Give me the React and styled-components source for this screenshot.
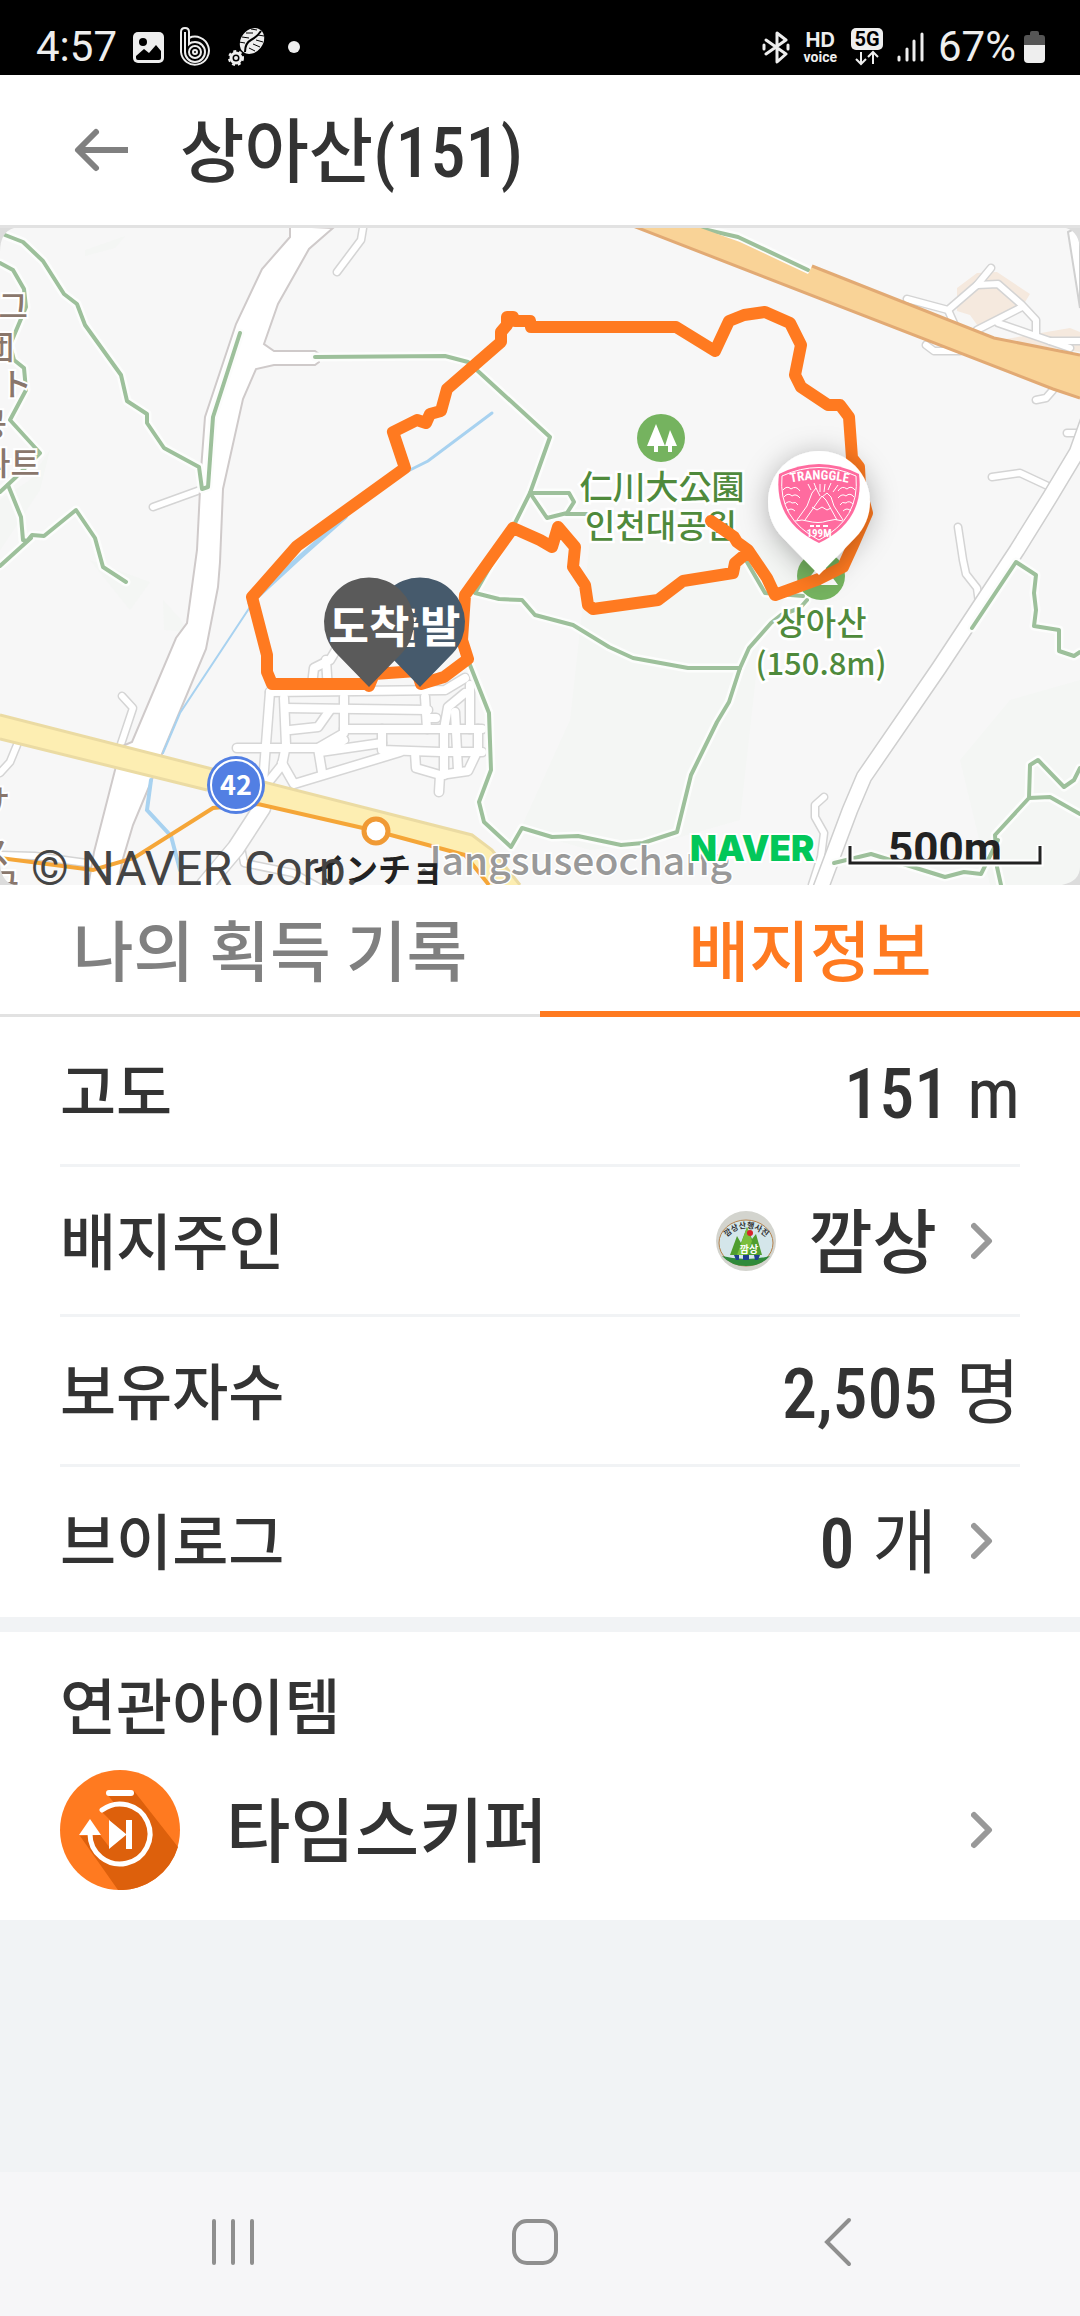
import React, { useState } from 'react'
import styled, { createGlobalStyle } from 'styled-components'

const GlobalStyle = createGlobalStyle`
  * {
    box-sizing: border-box;
  }
  body {
    margin: 0;
    background: #f1f3f5;
    color: #333;
    font-family: "Roboto Condensed", "Liberation Sans Narrow", "Noto Sans CJK KR", sans-serif;
  }
`

const Page = styled.div`
  min-height: 100vh;
  display: flex;
  flex-direction: column;
`

const StatusBar = styled.div`
  height: 75px;
  padding: 19px 35px 0 36px;
  display: flex;
  align-items: center;
  justify-content: space-between;
  background: #000;
  color: #eee;
  font-family: Roboto, sans-serif;
  font-size: 42px;
  line-height: 48px;
`

const StatusGroup = styled.div`
  display: flex;
  align-items: center;
  gap: ${props => props.$gap}px;
`

const Voice = styled.div`
  display: flex;
  flex-direction: column;
  align-items: center;
  font-family: Inter, sans-serif;
  font-weight: 700;
  font-size: 20px;
  line-height: 20px;

  small {
    font-family: Roboto, sans-serif;
    font-size: 14px;
    line-height: 14px;
  }
`

const Header = styled.header`
  height: 153px;
  padding: 0 60px 0 66px;
  display: flex;
  align-items: center;
  gap: 44px;
  background: #fff;
  border-bottom: 3px solid #e2e2e2;
`

const Title = styled.h1`
  margin: 0;
  padding-top: 6px;
  font-size: 70px;
  font-weight: 500;
  line-height: 100px;
`

const IconButton = styled.button`
  display: flex;
  align-items: center;
  justify-content: center;
  padding: 0;
  border: 0;
  background: none;
`

const MapView = styled.svg`
  display: block;
  width: 100%;
  height: auto;
  font-family: "Noto Sans CJK KR", sans-serif;
`

const Tabs = styled.div`
  display: flex;
  background: #fff;
`

const Tab = styled.button`
  flex: 1;
  height: 132px;
  padding: 6px 0 0;
  border: 0;
  background: none;
  font-family: inherit;
  font-size: 66px;
  font-weight: 500;
  line-height: 96px;
  color: ${props => (props.$active ? '#ff7a20' : '#808080')};
  box-shadow: inset 0 ${props => (props.$active ? '-6px 0 #ff7a20' : '-3px 0 #e2e2e2')};
`

const Panel = styled.section`
  padding: 0 60px;
  background: #fff;
`

const Row = styled.div`
  height: 150px;
  display: flex;
  align-items: center;
  justify-content: space-between;
  color: inherit;
  text-decoration: none;
  border-bottom: 3px solid ${props => (props.$last ? '#fff' : '#f1f3f5')};
`

const Label = styled.span`
  padding-top: 6px;
  font-size: 61px;
  font-weight: 500;
  line-height: 90px;
`

const Value = styled.span`
  display: flex;
  align-items: center;
`

const ValueText = styled.span`
  padding-top: 6px;
  font-size: 70px;
  font-weight: 500;
  line-height: 100px;
`

const Unit = styled.span`
  margin-left: 18px;
  font-weight: 400;
`

const Avatar = styled.svg`
  width: 60px;
  height: 60px;
  margin-right: 32px;
`

const Arrow = styled.svg`
  width: 24px;
  height: 40px;
  margin: 0 25px 0 34px;
`

const Related = styled.section`
  margin-top: 15px;
  padding: 26px 60px 30px;
  background: #fff;
`

const RelatedTitle = styled.h2`
  margin: 0 0 16px;
  padding-top: 6px;
  font-size: 61px;
  font-weight: 500;
  line-height: 90px;
`

const Item = styled.a`
  display: flex;
  align-items: center;
  height: 120px;
  color: inherit;
  text-decoration: none;
`

const ItemName = styled(ValueText)`
  flex: 1;
  margin-left: 46px;
`

const NavBar = styled.nav`
  height: 144px;
  margin-top: auto;
  padding: 0 91px 4px 82px;
  display: flex;
  background: #f6f6f8;

  ${IconButton} {
    flex: 1;
  }
`

const trails = [
  '5,235 23,242 43,261 64,294 77,304 85,325 121,375 127,401 147,414 147,423 164,448 199,467 202,489 208,487 213,417 240,333',
  '0,263 13,270 24,289 26,307 10,345 14,360 24,368 26,390 10,420 40,453 15,478 0,492',
  '8,485 21,517 23,540 27,541 32,535 44,536 76,510 95,538 103,567 126,582',
  '0,566 31,538',
  '315,357 445,356 468,362 550,437 530,493 515,523 475,593 499,599 522,600 535,615 573,625 609,647 633,658 688,668 740,668',
  '530,493 569,493 574,502 567,513 547,518 530,493',
  '566,514 587,514',
  '807,600 800,608 781,615 771,623 749,648 740,668 729,702 717,722 691,775 677,832 643,843 621,845 578,836 552,837 522,828 511,847 484,822 479,802 491,770 489,713 470,665',
  '747,562 765,593 803,596',
  '972,628 1016,562 1036,575 1034,593 1036,610 1034,626 1059,630 1059,651 1074,656 1080,652',
  '1080,768 1074,780 1064,787 1038,760 1030,765 1029,798 1050,797 1080,814',
  '1029,798 995,835 997,867 1001,885',
  '834,863 871,854 945,877 964,872 981,874 998,840',
  '699,228 738,237 808,270',
]

const lanes = [
  '363,228 361,240 337,272',
  '153,507 200,490',
  '122,696 133,708 120,747',
  '17,745 10,762 0,773',
  '0,855 35,856 94,864',
  '992,477 1020,473 1050,487',
  '958,527 963,560 966,574 977,588 979,603',
  '1067,433 1080,433',
  '1036,400 1046,398 1053,390',
  '824,797 815,805 815,817 824,833 821,857 812,885',
  '907,299 948,310 977,285 998,284 1022,305 1036,320 1036,335',
  '991,268 977,285',
  '948,310 957,330',
  '1022,307 977,330',
  '998,323 1070,348',
  '1050,341 1080,341',
  '926,345 934,351 960,351',
  '241,847 244,863 293,873 320,888',
]

const streets = [
  '270,692 264,770 262,795',
  '270,692 445,690 465,678',
  '285,708 428,710',
  '284,698 286,745',
  '344,697 344,733 318,748 237,748',
  '290,730 318,727 330,710',
  '344,729 424,729 482,729',
  '425,697 427,729',
  '427,718 436,718',
  '344,740 320,752 382,743',
  '382,729 382,750 440,752 482,752',
  '400,752 294,784 282,763',
  '262,790 282,765 286,745',
  '318,748 322,772',
  '415,752 416,768 440,775 468,771 478,750 478,729',
  '439,792 440,775',
  '444,775 444,729 448,707 465,693',
  '470,685 470,729',
  '455,712 458,770',
  '312,685 314,668 330,660 336,650',
  '326,660 328,690',
]

const Cased = ({ lines, width, color, casing, extra }) => (
  <g fill="none" strokeLinejoin="round" strokeLinecap="round">
    {lines.map(points => <polyline key={points} points={points} stroke={casing} strokeWidth={width + extra} />)}
    {lines.map(points => <polyline key={points} points={points} stroke={color} strokeWidth={width} />)}
  </g>
)

const Pin = ({ x, color, label }) => (
  <g>
    <path d={`M${x} 687 L${x - 33} 653 A45 45 0 1 1 ${x + 33} 653 Z`} fill={color} />
    <text x={x} y="643" textAnchor="middle" fontSize="44" fontWeight="700" fill="#fff">{label}</text>
  </g>
)

const TrailMap = () => (
  <MapView viewBox="0 228 1080 657" role="img" aria-label="상아산">
    <rect y="228" width="1080" height="657" fill="#f7f7f7" />
    <g fill="#f4f6f4">
      <path d="M85 250l40-14-10 12-30 8zM0 500l30-20 20-30-10 40-40 60zM90 560l60 22-20 28zM163 600l18 20 6 12-23-2z" />
      <path d="M590 540l230 0 -60 100-20 180-70 20-80 10-70-20 50-110zM960 760l50-60 70-20v205h-90z" />
    </g>
    <path d="M957 288l20-15 20-1 33 22-8 13-42 22-10-14-13-4zM1000 340l70-12 10 4v20z" fill="#f5e9de" />

    <Cased lines={lanes} width={6} extra={3} color="#fff" casing="#d4d4d4" />
    <Cased lines={streets} width={8} extra={3} color="#fff" casing="#d6d6d6" />
    <Cased lines={['262,808 236,848 205,885']} width={16} extra={3} color="#fff" casing="#d4d4d4" />
    <Cased lines={['1092,410 1077,452 1050,497 1017,550 939,668 864,777 850,810 820,890']} width={14} extra={3} color="#fff" casing="#cfcfcf" />
    <path d="M1068 232l8-4h4v80z" fill="#fff" stroke="#d0d0d0" strokeWidth="2" />
    <path
      d="M290 226v11l-28 32-26 55-31 93-4 53-4 80-10 73-11 15-44 104-12 5-5 23-21 82-6 35h30l4-25 11-37 18-43 11-28 44-105 12-62 2-25 3-73 20-90 13-30 18-4h41l4-3v-8l-4-3h-41l-10-7 14-40 31-55 24-21z"
      fill="#fff" stroke="#cfcaca" strokeWidth="2"
    />

    <g fill="none" stroke="#a8d2f0" strokeLinecap="round">
      <path d="M492 413l-24 18-40 30-18 9" strokeWidth="3" />
      <path d="M345 517l-45 40-50 46" strokeWidth="5" />
      <path d="M250 607l-70 106-17 40" strokeWidth="2" />
      <path d="M151 780l-4 30 24 26 9 34" strokeWidth="4" />
    </g>

    <Cased lines={trails} width={4} extra={5} color="#9dc09b" casing="#fcfdfc" />

    <path d="M633 226h62l45 16 68 32 4-8 182 72 86 17v42l-27-8z" fill="#f9d397" />
    <path d="M633 226l420 163 27 9M812 266l182 72 86 17" fill="none" stroke="#e2aa74" strokeWidth="3" />
    <path d="M0 715l472 120 20 15 28 35h-31l-24-30-258-65-207-51z" fill="#fdeeb2" />
    <path d="M0 715l472 120 20 15 28 35M0 739l207 51" fill="none" stroke="#ebdba3" strokeWidth="3" />
    <path d="M0 858l93 12 41-12 79-50 45-4 118 27 89 24 24 30" fill="none" stroke="#f5a638" strokeWidth="4" />
    <circle cx="376" cy="831" r="12" fill="#fff" stroke="#f09a35" strokeWidth="5" />
    <circle cx="236" cy="785" r="29" fill="#527fe3" />
    <circle cx="236" cy="785" r="25" fill="none" stroke="#fff" strokeWidth="2" />
    <text x="236" y="795" textAnchor="middle" fontSize="27" fontWeight="700" fill="#fff">42</text>

    <g fontSize="32" fontWeight="500" fill="#8a776c" stroke="#fff" strokeWidth="4" paintOrder="stroke" textAnchor="end">
      <text x="28" y="318">그</text>
      <text x="14" y="359">団</text>
      <text x="32" y="396">ト</text>
      <text x="7" y="436">공</text>
      <text x="40" y="475">파트</text>
      <text x="10" y="813">サ</text>
      <text x="10" y="864">ス</text>
      <text x="19" y="897">국</text>
    </g>

    <circle cx="661" cy="438" r="24" fill="#75b35f" />
    <path d="M656 424l9 22h-7v6h-4v-6h-7zM670 430l7 16h-5v6h-4v-6h-3z" fill="#fff" />
    <circle cx="821" cy="576" r="24" fill="#75b35f" />
    <path d="M821 562l17 23h-34z" fill="#fff" />
    <g fontSize="33" fontWeight="500" fill="#4f8a3c" stroke="#fff" strokeWidth="5" paintOrder="stroke" textAnchor="middle">
      <text x="662" y="499">仁川大公園</text>
      <text x="661" y="538">인천대공원</text>
      <text x="821" y="635">상아산</text>
      <text x="821" y="675" fontSize="31">(150.8m)</text>
    </g>
    <text x="420" y="875" fontSize="39" fontWeight="500" fill="#999" stroke="#fff" strokeWidth="3" paintOrder="stroke">Jangsuseochang</text>

    <path
      d="M369 684L272 684 267 672V655L252 597 297 546 405 468 393 432 417 420 426 423 430 414 441 411 447 389 501 342V332L507 325V317H513L515 321 530 321 531 327H676L715 351 729 321 744 315 765 312 790 323 801 345 795 375 801 387 828 405H840L849 417 852 458 859 467 860 487 867 513 853 545 843 567 819 579 775 595 767 578 748 550 737 542 734 537 711 521M748 552L735 563 733 573 683 581 658 600 593 609 588 605 585 585 573 567 575 547 558 527 552 547 540 540 513 528 465 595 462 640 468 659 444 677 421 684 417 671 374 674 369 686"
      fill="none" stroke="#ff7a20" strokeWidth="12" strokeLinejoin="round" strokeLinecap="round"
    />

    <Pin x={420} color="#465a6c" label="출발" />
    <Pin x={369} color="#5a5a5a" label="도착" />

    <defs>
      <filter id="pin-shadow" x="-50%" y="-50%" width="200%" height="200%">
        <feDropShadow dx="0" dy="4" stdDeviation="14" floodColor="#000" floodOpacity="0.3" />
      </filter>
      <path id="badge-arc" d="M785 484q34-9 69 0" />
    </defs>
    <path d="M819 575L783 538A51 51 0 1 1 855 538Z" fill="#fff" filter="url(#pin-shadow)" />
    <path d="M779 474q40-20 80 0q6 47-40 69q-46-22-40-69z" fill="#ff6b9f" />
    <g fill="none" stroke="#fff" strokeWidth="1">
      <path d="M782 476q37-17 74 0q4 43-37 64q-41-21-37-64z" />
      <path d="M797 520l10-14 5-13 4-5 4 8M843 520l-9-14-3-9-4-4-5 4M805 520l14-20 3-4 4 4 11 20M812 507l5 3 5-3 5 3 4-2M795 521q8-2 12 0q12 3 20 0q8-3 16 0" />
      <path d="M783 490q4-5 8-1q5-4 9 2M784 497q4-5 8-1q4-3 8 2M785 504q4-4 7-1q4-2 6 2M787 511q4-4 8 0M855 490q-4-5-8-1q-5-4-9 2M854 497q-4-5-8-1q-4-3-8 2M853 504q-4-4-7-1q-4-2-6 2M851 511q-4-4-8 0" />
      <path d="M820 492v-8M824 492l1-8M816 488l-2-5M828 490l3-7M833 492l5-7M811 490l-3-6" />
      <path d="M810 526h4M816 526h4M823 526h5" strokeWidth="2" />
    </g>
    <g fontFamily="Roboto Condensed, Roboto, sans-serif" fontWeight="700" fill="#fff" textAnchor="middle">
      <text fontSize="13">
        <textPath href="#badge-arc" startOffset="50%">TRANGGLE</textPath>
      </text>
      <text x="819" y="537" fontSize="11">199M</text>
    </g>

    <text x="312" y="882" fontSize="33" fontWeight="700" fill="#222">インチョ</text>
    <text x="31" y="885" fontSize="48" fontFamily="Roboto, sans-serif" fill="#444">© NAVER Corp.</text>
    <text x="690" y="861" fontSize="35" fontFamily="Inter, sans-serif" fontWeight="900" fill="#03c75a" stroke="#fff" strokeWidth="4" paintOrder="stroke">NAVER</text>
    <text x="945" y="864" textAnchor="middle" fontSize="44" fontFamily="Roboto, sans-serif" fontWeight="700" fill="#222">500m</text>
    <path d="M850 845v18h190v-18" fill="none" stroke="#fff" strokeWidth="7" />
    <path d="M850 846v17h190v-17" fill="none" stroke="#222" strokeWidth="3" />
    <path d="M0 228h14q-14 4-14 24zM1080 228h-14q14 4 14 24zM0 885h14q-14-4-14-24zM1080 885h-18q18-4 18-18z" fill="#dcdcdc" />
  </MapView>
)

const Chevron = () => (
  <Arrow viewBox="0 0 24 40" fill="none" stroke="#999" strokeWidth="6" strokeLinecap="round" strokeLinejoin="round">
    <path d="M3 5l15 15L3 35" />
  </Arrow>
)

const OwnerAvatar = () => (
  <Avatar viewBox="0 0 60 60">
    <circle cx="30" cy="30" r="30" fill="#d3d4ce" />
    <ellipse cx="30" cy="32" rx="27" ry="23" fill="#d4e6ea" stroke="#b5824e" strokeWidth="1" />
    <path d="M6 45q24 6 48 0q-9 10-24 10t-24-10z" fill="#2f8a3a" />
    <path d="M14 44l7-19 4 7 6-16 5 12 4-5 6 21z" fill="#4f9e2f" />
    <path d="M21 44l10-28 5 14-5 14z" fill="#7bbf3c" />
    <circle cx="34" cy="22" r="3" fill="#d8232a" />
    <path d="M18 44h5v5h-3zM27 44h6v5h-6zM38 44h6l-2 5h-3z" fill="#1f3f8f" />
    <path id="owner-arc" d="M9 28q21-22 43 0" fill="none" />
    <text fontSize="8" fontWeight="700" fill="#333" textAnchor="middle">
      <textPath href="#owner-arc" startOffset="50%">깜상산행사진</textPath>
    </text>
    <text x="33" y="42" fontSize="10" fontWeight="700" fill="#fff" textAnchor="middle">깜상</text>
  </Avatar>
)

const SkipperIcon = () => (
  <svg width="120" height="120" viewBox="0 0 120 120">
    <circle cx="60" cy="60" r="60" fill="#ff7a20" />
    <path d="M74 21L118 77A60 60 0 0 1 58 120L20 66 40 65 50 78V50L41 41 55 34 47 24z" fill="#dd600c" />
    <g fill="none" stroke="#fff" strokeWidth="6" strokeLinecap="round">
      <path d="M49 23h22" />
      <path d="M42 40A30 30 0 1 1 30 64" strokeWidth="5" />
    </g>
    <path d="M19 65h22L30 49zM49 50v29l17-14v14h6V50h-6v14z" fill="#fff" />
  </svg>
)

const App = () => {
  const [tab, setTab] = useState('info')

  return (
    <Page>
      <GlobalStyle />
      <StatusBar>
        <StatusGroup $gap={16}>
          <span>4:57</span>
          <svg width="31" height="31" viewBox="0 0 31 31">
            <rect width="31" height="31" rx="5" fill="#eee" />
            <circle cx="10" cy="10" r="4" fill="#000" />
            <path d="M3 24l8-7 5 4 7-8 5 6v7q0 2-2 2H5q-2 0-2-2z" fill="#000" />
          </svg>
          <svg width="31" height="40" viewBox="0 0 31 40" fill="none" stroke="#eee" strokeWidth="2">
            <path d="M1 25V5q0-4 4-4t4 4v6" />
            <path d="M5 25V5M1 25a14 14 0 1 0 8-14M5 25a10 10 0 1 0 10-10q-4 0-6 2V9" />
            <circle cx="15" cy="25" r="6" />
            <circle cx="15" cy="25" r="2" />
          </svg>
          <svg width="39" height="38" viewBox="0 0 39 38" fill="none" stroke="#eee">
            <ellipse cx="25" cy="13" rx="11" ry="14" transform="rotate(38 25 13)" fill="#eee" stroke="none" />
            <path d="M18 24q0-9 6-12T34 3" stroke="#000" strokeWidth="2" />
            <path d="M12 14l6 1M15 9l7 1M19 5l7 0M24 1l6 1M22 20l6 3M26 16l7 3M29 12l7 2M31 7l6 1" stroke="#000" strokeWidth="1" />
            <circle cx="9" cy="30" r="5" strokeWidth="3" />
            <circle cx="9" cy="30" r="7" strokeWidth="2" strokeDasharray="3 3" />
            <circle cx="9" cy="30" r="1" strokeWidth="2" />
          </svg>
          <svg width="24" height="12" viewBox="0 0 24 12">
            <circle cx="12" cy="6" r="6" fill="#eee" />
          </svg>
        </StatusGroup>
        <StatusGroup $gap={14}>
          <svg width="28" height="33" viewBox="0 0 28 33" fill="none" stroke="#eee" strokeWidth="3" strokeLinecap="round" strokeLinejoin="round">
            <path d="M4 9l20 14-9 8V2l9 7L4 23" />
            <path d="M2 14v4M26 14v4" />
          </svg>
          <Voice>
            HD
            <small>voice</small>
          </Voice>
          <svg width="32" height="38" viewBox="0 0 32 38">
            <rect width="32" height="22" rx="5" fill="#eee" />
            <text x="16" y="18" textAnchor="middle" fontSize="20" fontWeight="700" fontFamily="Roboto, sans-serif" fill="#000">5G</text>
            <path d="M10 24v12M5 31l5 5 5-5M22 36V24M17 29l5-5 5 5" fill="none" stroke="#eee" strokeWidth="2" />
          </svg>
          <svg width="27" height="30" viewBox="0 0 27 30" stroke="#eee" strokeWidth="3" strokeLinecap="round">
            <path d="M2 25v3M10 17v11M17 9v19M25 2v26" />
          </svg>
          <StatusGroup $gap={8}>
            <span>67%</span>
            <svg width="21" height="32" viewBox="0 0 21 32">
              <path d="M6 2q0-2 2-2h5q2 0 2 2v2h3q3 0 3 3v8H0V7q0-3 3-3h3z" fill="#555" />
              <path d="M0 14h21v14q0 4-4 4H4q-4 0-4-4z" fill="#eee" />
            </svg>
          </StatusGroup>
        </StatusGroup>
      </StatusBar>

      <Header>
        <IconButton aria-label="뒤로">
          <svg width="70" height="60" viewBox="0 0 70 60" fill="none" stroke="#808080" strokeWidth="6" strokeLinejoin="round">
            <path d="M12 30h50" />
            <path d="M30 12L12 30l18 18" strokeLinecap="round" />
          </svg>
        </IconButton>
        <Title>상아산(151)</Title>
      </Header>

      <TrailMap />

      <Tabs role="tablist">
        <Tab role="tab" $active={tab === 'record'} onClick={() => setTab('record')}>나의 획득 기록</Tab>
        <Tab role="tab" $active={tab === 'info'} onClick={() => setTab('info')}>배지정보</Tab>
      </Tabs>

      <Panel>
        <Row>
          <Label>고도</Label>
          <ValueText>151<Unit>m</Unit></ValueText>
        </Row>
        <Row as="a" href="#owner">
          <Label>배지주인</Label>
          <Value><OwnerAvatar /><ValueText>깜상</ValueText><Chevron /></Value>
        </Row>
        <Row>
          <Label>보유자수</Label>
          <ValueText>2,505<Unit>명</Unit></ValueText>
        </Row>
        <Row as="a" href="#vlog" $last>
          <Label>브이로그</Label>
          <Value><ValueText>0<Unit>개</Unit></ValueText><Chevron /></Value>
        </Row>
      </Panel>

      <Related>
        <RelatedTitle>연관아이템</RelatedTitle>
        <Item href="#time-skipper">
          <SkipperIcon />
          <ItemName>타임스키퍼</ItemName>
          <Chevron />
        </Item>
      </Related>

      <NavBar>
        <IconButton aria-label="최근 앱">
          <svg width="48" height="50" viewBox="0 0 48 50" stroke="#8f8f8f" strokeWidth="4" strokeLinecap="round">
            <path d="M5 4v42M24 4v42M43 4v42" />
          </svg>
        </IconButton>
        <IconButton aria-label="홈">
          <svg width="48" height="48" viewBox="0 0 48 48" fill="none" stroke="#8f8f8f" strokeWidth="4">
            <rect x="3" y="3" width="42" height="42" rx="13" />
          </svg>
        </IconButton>
        <IconButton aria-label="뒤로">
          <svg width="30" height="50" viewBox="0 0 30 50" fill="none" stroke="#8f8f8f" strokeWidth="4" strokeLinecap="round">
            <path d="M26 3L4 25l22 22" />
          </svg>
        </IconButton>
      </NavBar>
    </Page>
  )
}

export default App
